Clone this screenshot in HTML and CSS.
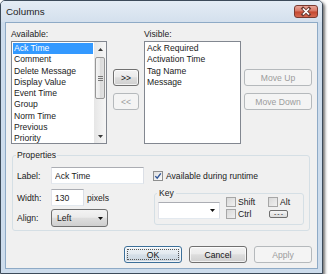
FILE: index.html
```html
<!DOCTYPE html>
<html lang="en">
<head>
  <meta charset="UTF-8">
  <title>Columns</title>
  <link rel="stylesheet" href="styles.css">
</head>
<body>
  <div class="window">
    <div class="titlebar">
      <span class="title">Columns</span>
      <span class="close">
        <svg width="24" height="13" viewBox="0 0 24 13">
          <path d="M9 3.5l6 6M15 3.5l-6 6" stroke="#6b3a32" stroke-width="3.2" stroke-linecap="square"/>
          <path d="M9 3.5l6 6M15 3.5l-6 6" stroke="#fff" stroke-width="1.7"/>
        </svg>
      </span>
    </div>

    <div class="client">
      <div class="lists">
        <div class="list-col avail">
          <span class="cap">Available:</span>
          <div class="listbox">
            <ul class="items">
              <li class="sel">Ack Time</li>
              <li>Comment</li>
              <li>Delete Message</li>
              <li>Display Value</li>
              <li>Event Time</li>
              <li>Group</li>
              <li>Norm Time</li>
              <li>Previous</li>
              <li>Priority</li>
            </ul>
            <div class="vscroll">
              <span class="sarrow"><svg width="5" height="3" viewBox="0 0 5 3"><path d="M0 3h5L2.5 0z" fill="#3a3a3a"/></svg></span>
              <span class="thumb">
                <svg width="5" height="5" viewBox="0 0 5 5"><path d="M0 .5h5M0 2.5h5M0 4.5h5" stroke="#777" stroke-width="1"/></svg>
              </span>
              <span class="sfill"></span>
              <span class="sarrow"><svg width="5" height="3" viewBox="0 0 5 3"><path d="M0 0h5L2.5 3z" fill="#3a3a3a"/></svg></span>
            </div>
          </div>
        </div>

        <div class="move-col">
          <button class="btn">&gt;&gt;</button>
          <button class="btn" disabled>&lt;&lt;</button>
        </div>

        <div class="list-col visible">
          <span class="cap">Visible:</span>
          <div class="listbox">
            <ul class="items">
              <li>Ack Required</li>
              <li>Activation Time</li>
              <li>Tag Name</li>
              <li>Message</li>
            </ul>
          </div>
        </div>

        <div class="order-col">
          <button class="btn" disabled>Move Up</button>
          <button class="btn" disabled>Move Down</button>
        </div>
      </div>

      <fieldset class="group props">
        <legend>Properties</legend>
        <div class="props-body">
          <div class="props-left">
            <div class="prow">
              <span class="plabel">Label:</span>
              <input class="txt txt-label" type="text" value="Ack Time">
            </div>
            <div class="prow">
              <span class="plabel">Width:</span>
              <input class="txt txt-width" type="text" value="130">
              <span class="unit">pixels</span>
            </div>
            <div class="prow prow-align">
              <span class="plabel">Align:</span>
              <div class="dropbtn">
                <span>Left</span>
                <svg width="5" height="3" viewBox="0 0 5 3"><path d="M0 0h5L2.5 3z" fill="#111"/></svg>
              </div>
            </div>
          </div>

          <div class="props-right">
            <label class="check">
              <span class="cb">
                <svg width="8" height="8" viewBox="0 0 8 8"><path d="M1.3 4.1l1.9 2.1L6.8 1.4" fill="none" stroke="#2f5597" stroke-width="1.4"/></svg>
              </span>
              Available during runtime
            </label>

            <fieldset class="group key">
              <legend>Key</legend>
              <div class="key-body">
                <div class="keycombo">
                  <svg width="5" height="3" viewBox="0 0 5 3"><path d="M0 0h5L2.5 3z" fill="#111"/></svg>
                </div>
                <div class="mods">
                  <label class="mod"><span class="cb cb-off"></span>Shift</label>
                  <label class="mod"><span class="cb cb-off"></span>Alt</label>
                  <label class="mod"><span class="cb cb-off"></span>Ctrl</label>
                  <button class="mini">---</button>
                </div>
              </div>
            </fieldset>
          </div>
        </div>
      </fieldset>

      <div class="actions">
        <button class="btn btn-act btn-default">OK</button>
        <button class="btn btn-act">Cancel</button>
        <button class="btn btn-act" disabled>Apply</button>
      </div>
    </div>
  </div>
</body>
</html>
```

FILE: styles.css
```css
* {
  box-sizing: border-box;
}
body {
  margin: 0;
  background: #fff;
  font-family: "Liberation Sans", Arial, sans-serif;
  font-size: 8.6px;
  color: #1b1b1b;
}

/* window frame */
.window {
  width: 323px;
  height: 274px;
  display: flex;
  flex-direction: column;
  border: 1px solid #3d4b5a;
  border-radius: 5px 5px 0 0;
  background: #cddcec;
  padding: 0 4px 4px;
  box-shadow: 2px 2px 3px rgba(0, 0, 0, 0.55);
}
.titlebar {
  height: 21px;
  margin: 0 -4px;
  padding-left: 5px;
  display: flex;
  align-items: center;
  background: linear-gradient(#e4ecf5, #d4e0ed);
  border-radius: 4px 4px 0 0;
}
.title {
  font-size: 9.8px;
  color: #1e1e1e;
}
.close {
  margin-left: auto;
  margin-right: 4px;
  width: 24px;
  height: 13px;
  display: flex;
  border: 1px solid #7a3a30;
  border-radius: 3px;
  background: linear-gradient(#e8a699, #d77563 48%, #c4472f 52%, #d66a52);
}
.close svg {
  margin: -1px;
}
.client {
  flex: 1;
  background: #f0f0f0;
  border: 1px solid #8eaac6;
}

/* lists */
.lists {
  display: flex;
  padding: 6px 0 0 5px;
}
.cap {
  display: block;
  height: 11px;
  line-height: 11px;
  margin-bottom: 1px;
}
.avail {
  width: 96px;
}
.visible {
  width: 97px;
  margin-left: 5px;
}
.listbox {
  height: 103px;
  display: flex;
  border: 1px solid #828790;
  background: #fff;
}
.items {
  flex: 1;
  min-width: 0;
  margin: 0;
  padding: 1px;
  list-style: none;
}
.items li {
  line-height: 11.25px;
  padding-left: 1px;
  white-space: nowrap;
  overflow: hidden;
}
.items li.sel {
  background: #3399ff;
  color: #fff;
}
.vscroll {
  width: 12px;
  display: flex;
  flex-direction: column;
  background: linear-gradient(90deg, #e6e6e6, #f6f6f6);
}
.sarrow {
  height: 14px;
  display: flex;
  align-items: center;
  justify-content: center;
}
.thumb {
  height: 42px;
  margin: 1px 1px 0;
  display: flex;
  align-items: center;
  justify-content: center;
  border: 1px solid #979797;
  border-radius: 2px;
  background: linear-gradient(90deg, #f4f4f4, #e9e9e9 50%, #dadada 50%, #e2e2e2);
}
.sfill {
  flex: 1;
}
.move-col,
.order-col {
  display: flex;
  flex-direction: column;
  gap: 7px;
  padding-top: 40px;
}
.move-col {
  width: 26px;
  margin-left: 6px;
}
.order-col {
  width: 68px;
  margin-left: 3px;
}

/* buttons */
.btn {
  height: 17px;
  padding: 0;
  font: inherit;
  color: #111;
  border: 1px solid #707070;
  border-radius: 3px;
  background: linear-gradient(#f3f3f3, #ebebeb 45%, #dddddd 52%, #cfcfcf);
  box-shadow: inset 0 0 0 1px rgba(255, 255, 255, 0.7);
}
.btn:disabled {
  border-color: #b5b9bc;
  background: #f4f4f4;
  color: #9c9c9c;
  box-shadow: none;
}
.btn-default {
  border-color: #3c6f99;
  background: linear-gradient(#eef3f7, #e3eaf0 45%, #d5dfe8 52%, #cbd6e0);
  outline: 1px dotted #555;
  outline-offset: -4px;
}

/* property groups */
.group {
  border: 1px solid #d5dfe5;
  border-radius: 3px;
  margin: 0;
}
.group legend {
  line-height: 11px;
}
.props {
  width: 298px;
  margin: 6px 0 0 6px;
  padding: 0 4px 3px;
}
.props legend {
  padding: 0 1px;
  margin-left: -1px;
}
.props-body {
  display: flex;
  padding-top: 6px;
}
.props-left {
  width: 136px;
}
.prow {
  height: 17px;
  display: flex;
  align-items: center;
}
.prow + .prow {
  margin-top: 5px;
}
.prow-align {
  height: 18px;
}
.prow + .prow-align {
  margin-top: 3px;
}
.plabel {
  width: 34px;
}
.txt {
  height: 17px;
  padding: 0 0 0 3px;
  font: inherit;
  color: #1b1b1b;
  background: #fff;
  border: 1px solid;
  border-color: #abadb3 #dbdfe6 #e3e9ef #e2e3ea;
  outline: none;
}
.txt-label {
  width: 93px;
}
.txt-width {
  width: 33px;
}
.unit {
  margin-left: 3px;
}
.dropbtn {
  width: 57px;
  height: 18px;
  padding: 0 4px 0 5px;
  display: flex;
  align-items: center;
  justify-content: space-between;
  border: 1px solid #707070;
  border-radius: 3px;
  background: linear-gradient(#f3f3f3, #ebebeb 45%, #dddddd 52%, #cfcfcf);
}
.props-right {
  flex: 1;
}
.check {
  height: 17px;
  display: flex;
  align-items: center;
  gap: 3px;
}
.cb {
  width: 10px;
  height: 10px;
  flex: none;
  display: flex;
  align-items: center;
  justify-content: center;
  border: 1px solid #8e8f8f;
  background: linear-gradient(135deg, #dedede, #fbfbfb);
}
.cb-off {
  border-color: #a6a6a6;
  background: linear-gradient(135deg, #d8d8d8, #f0f0f0);
}

/* key box */
.key {
  width: 150px;
  margin: 4px 0 0 1px;
  padding: 0 3px 4px;
}
.key legend {
  padding: 0 2px;
}
.key-body {
  display: flex;
  align-items: flex-start;
  padding-top: 3px;
}
.keycombo {
  width: 62px;
  height: 17px;
  padding-right: 4px;
  display: flex;
  align-items: center;
  justify-content: flex-end;
  background: #fff;
  border: 1px solid;
  border-color: #abadb3 #dbdfe6 #e3e9ef #e2e3ea;
}
.mods {
  margin: -6px 0 0 6px;
  display: grid;
  grid-template-columns: 42px auto;
  grid-auto-rows: 12px;
  align-items: center;
}
.mod {
  display: flex;
  align-items: center;
  gap: 2px;
}
.mini {
  width: 19px;
  height: 8px;
  margin-left: 1px;
  padding: 0 0 0 1px;
  font: 7px/6px "Liberation Sans", Arial, sans-serif;
  letter-spacing: 1px;
  color: #222;
  border: 1px solid #6f6f6f;
  border-radius: 2px;
  background: linear-gradient(#f6f6f6, #dcdcdc);
}

/* dialog buttons */
.actions {
  display: flex;
  justify-content: flex-end;
  gap: 7px;
  margin-top: 15px;
  padding-right: 5px;
}
.btn-act {
  width: 58px;
}
```
